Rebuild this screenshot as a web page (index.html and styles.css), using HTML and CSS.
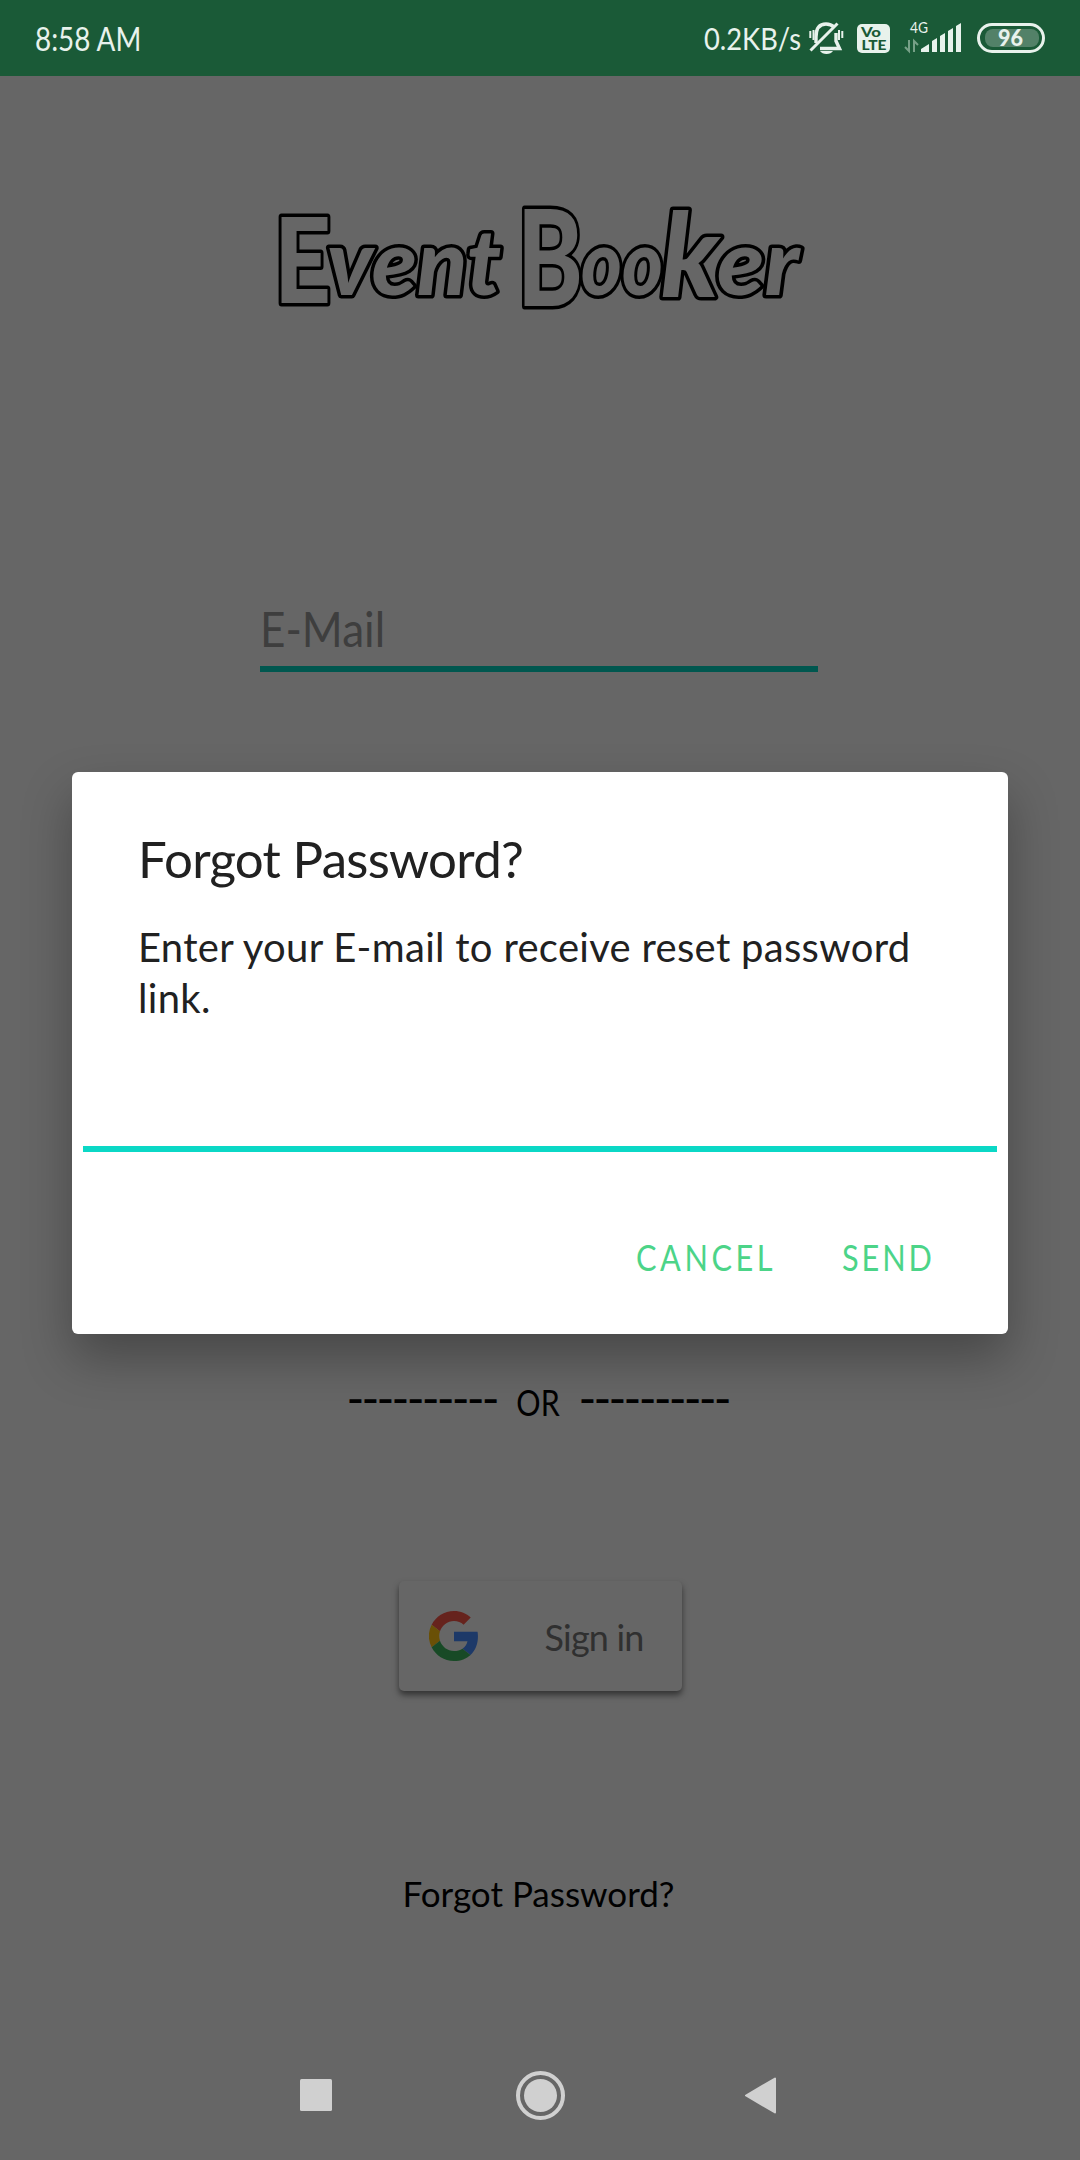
FILE: index.html
```html
<!DOCTYPE html>
<html lang="en">
<head>
<meta charset="utf-8">
<meta name="viewport" content="width=device-width">
<title>Event Booker</title>
<link rel="stylesheet" href="styles.css">
</head>
<body>
<header class="status">
  <div class="clock"><span class="narrow">8:58 AM</span></div>
  <div class="speed"><span class="narrow">0.2KB/s</span></div>
  <svg class="status-icons" viewBox="0 0 280 76" aria-hidden="true">
    <g fill="none" stroke="#e8f2ec" stroke-width="3.4">
      <path d="M16 43V37C16 28 20 24 26 24Q31 24 34 27M36 33V41L39.500 48.500H20"/>
      <path d="M10.500 50.500L37.500 23.500" stroke-width="3"/>
      <path d="M10.300 31V38M13.500 30V40M39 30V40M42.300 31V38" stroke-width="2"/>
    </g>
    <path d="M20 51H33Q31 54 26.500 54Q22 54 20 51Z" fill="#e8f2ec"/>
    <rect x="57" y="24" width="33" height="29" rx="5" fill="#e8f2ec"/>
    <g class="volte"><text x="61" y="36.500" textLength="20" lengthAdjust="spacingAndGlyphs">Vo</text><text x="61.500" y="49.500" textLength="25" lengthAdjust="spacingAndGlyphs">LTE</text></g>
    <text class="net" x="110" y="33" textLength="18" lengthAdjust="spacingAndGlyphs">4G</text>
    <path d="M109 40V51L105 47M114 52V41L118 45" fill="none" stroke="#76a087" stroke-width="2"/>
    <path d="M121 52V49L129 44V52ZM132 52V41L137 38V52ZM140 52V36L145 33V52ZM148 52V31L153 28V52ZM156 52V26L161 23V52Z" fill="#e8f2ec"/>
    <rect x="178.500" y="24.500" width="65" height="27" rx="13.500" fill="none" stroke="#e8f2ec" stroke-width="3"/>
    <rect x="185" y="29" width="54" height="18" rx="8" fill="#538168"/>
    <text class="level" x="198" y="46" textLength="25" lengthAdjust="spacingAndGlyphs">96</text>
  </svg>
</header>
<main class="login">
  <svg class="logo" viewBox="0 0 560 130" role="img" aria-label="Event Booker">
    <text class="cap" x="14" y="113" textLength="57" lengthAdjust="spacingAndGlyphs">E</text>
    <text class="low" x="67" y="105" textLength="174" lengthAdjust="spacingAndGlyphs">vent</text>
    <text class="cap tall" x="257" y="116" textLength="66" lengthAdjust="spacingAndGlyphs">B</text>
    <text class="low" x="321" y="105" textLength="82" lengthAdjust="spacingAndGlyphs">oo</text>
    <text class="low ascender" x="401" y="107" textLength="58" lengthAdjust="spacingAndGlyphs">k</text>
    <text class="low" x="457" y="105" textLength="82" lengthAdjust="spacingAndGlyphs">er</text>
  </svg>
  <div class="email"><span class="narrow">E-Mail</span></div>
  <div class="or"><span class="dashes">----------</span><span class="word">OR</span><span class="dashes">----------</span></div>
  <div class="google">
    <svg class="g" viewBox="0 0 48 48" aria-hidden="true">
      <path fill="#66231d" d="M24 9.500c3.540 0 6.710 1.220 9.210 3.600l6.850-6.850C35.900 2.380 30.470 0 24 0 14.620 0 6.510 5.380 2.560 13.220l7.980 6.190C12.430 13.720 17.740 9.500 24 9.500z"/>
      <path fill="#1d3968" d="M46.980 24.550c0-1.570-.15-3.090-.38-4.550H24v9.020h12.940c-.58 2.960-2.260 5.480-4.780 7.180l7.730 6c4.510-4.180 7.090-10.360 7.090-17.650z"/>
      <path fill="#6a5006" d="M10.530 28.590A14.500 14.500 0 0 1 10.530 19.410L2.560 13.220A23.900 23.900 0 0 0 2.560 34.780z"/>
      <path fill="#184a26" d="M24 48c6.480 0 11.930-2.130 15.890-5.810l-7.730-6c-2.150 1.450-4.920 2.300-8.160 2.300-6.260 0-11.570-4.220-13.470-9.910l-7.980 6.190C6.510 42.620 14.620 48 24 48z"/>
    </svg>
    <span>Sign in</span>
  </div>
  <div class="forgot">Forgot Password?</div>
</main>
<nav class="nav">
  <svg viewBox="0 0 520 90" aria-hidden="true">
    <g fill="#d0d0d0"><rect x="20" y="29" width="32" height="32" rx="1.500"/>
    <circle cx="260.500" cy="45.500" r="16.500"/>
    <path d="M466 45.500L495 28.500V62.500Z" stroke="#d0d0d0" stroke-width="2" stroke-linejoin="round"/></g>
    <circle cx="260.500" cy="45.500" r="22.500" fill="none" stroke="#d0d0d0" stroke-width="4"/>
  </svg>
</nav>
<section class="dialog" role="dialog">
  <h1>Forgot Password?</h1>
  <p>Enter your E-mail to receive reset password<br>link.</p>
  <div class="field"></div>
  <div class="actions"><div class="cancel"><span>CANCEL</span></div><div class="send"><span>SEND</span></div></div>
</section>
</body>
</html>
```
FILE: styles.css
```css
* { box-sizing: border-box; }
body { margin: 0; width: 1080px; height: 2160px; display: flex; flex-direction: column; position: relative; overflow: hidden; background: #666; color: #000; font-family: Lato, "Liberation Sans", sans-serif; }
.narrow { display: inline-block; transform: scaleX(.87); transform-origin: left; }
.status { height: 76px; flex: none; display: flex; background: #1a5a37; color: #e8f2ec; line-height: 77px; }
.clock { width: 704px; padding-left: 35px; font-size: 32px; }
.speed { width: 96px; font-size: 30px; white-space: nowrap; }
.speed .narrow { transform: scaleX(.91); }
.status-icons { width: 280px; height: 76px; }
.volte { font: 900 14px Lato, sans-serif; fill: #1a5a37; }
.net { font-size: 15px; fill: #e8f2ec; }
.level { font-size: 23px; font-weight: 900; fill: #e8f2ec; }
.login { flex: 1; display: flex; flex-direction: column; align-items: center; }
.logo { width: 560px; height: 130px; margin-top: 114px; overflow: visible; }
.logo text { font-weight: 900; fill: #666; stroke: #000; stroke-width: 7px; stroke-linejoin: round; paint-order: stroke; }
.logo .cap { font-size: 118px; }
.logo .tall { font-size: 134px; }
.logo .low { font-size: 92px; font-style: italic; }
.logo .ascender { font-size: 116px; }
.email { width: 558px; height: 72px; margin: 280px 2px 0 0; border-bottom: 6px solid #00574f; font-size: 49px; line-height: 56px; color: #3e3e3e; }
.email .narrow { transform: scaleX(.9); }
.or { display: grid; grid-template-columns: 150px 82px 150px; align-items: baseline; height: 50px; margin: 701px 5px 0 0; font-size: 37px; line-height: 50px; white-space: nowrap; }
.dashes { font-size: 48px; letter-spacing: -2.8px; }
.word { text-align: center; transform: scaleX(.82); }
.google { width: 283px; height: 110px; margin-top: 158px; padding: 0 30px; display: flex; align-items: center; border-radius: 5px; background: #666; box-shadow: 0 4px 6px rgba(0,0,0,.5); font-size: 36px; letter-spacing: -.8px; white-space: nowrap; color: #303030; }
.g { width: 50px; height: 50px; margin-right: 66px; }
.google span { padding-top: 2px; }
.forgot { margin: 178px 3px 0 0; font-size: 35px; line-height: 48px; }
.nav { height: 110px; flex: none; display: flex; justify-content: center; }
.nav svg { width: 520px; height: 90px; }
.dialog { position: absolute; left: 72px; top: 772px; width: 936px; height: 562px; border-radius: 6px; background: #fff; color: #212121; box-shadow: 0 24px 50px rgba(0,0,0,.3); }
h1 { margin: 57px 66px 0; font-size: 51px; line-height: 60px; font-weight: 400; letter-spacing: -.7px; }
p { margin: 33px 66px 0; font-size: 40px; line-height: 51px; letter-spacing: .3px; white-space: nowrap; }
.field { margin: 122px 11px 0; height: 6px; background: #0bd8c6; }
.actions { display: flex; padding-left: 564px; margin-top: 80px; font-size: 37px; line-height: 50px; color: #4cd488; }
.actions div { width: 206px; }
.actions .send { width: 110px; }
.actions span { display: inline-block; transform: scaleX(.83); transform-origin: left; letter-spacing: 4.3px; }
.actions .send span { letter-spacing: 3.5px; }
```
